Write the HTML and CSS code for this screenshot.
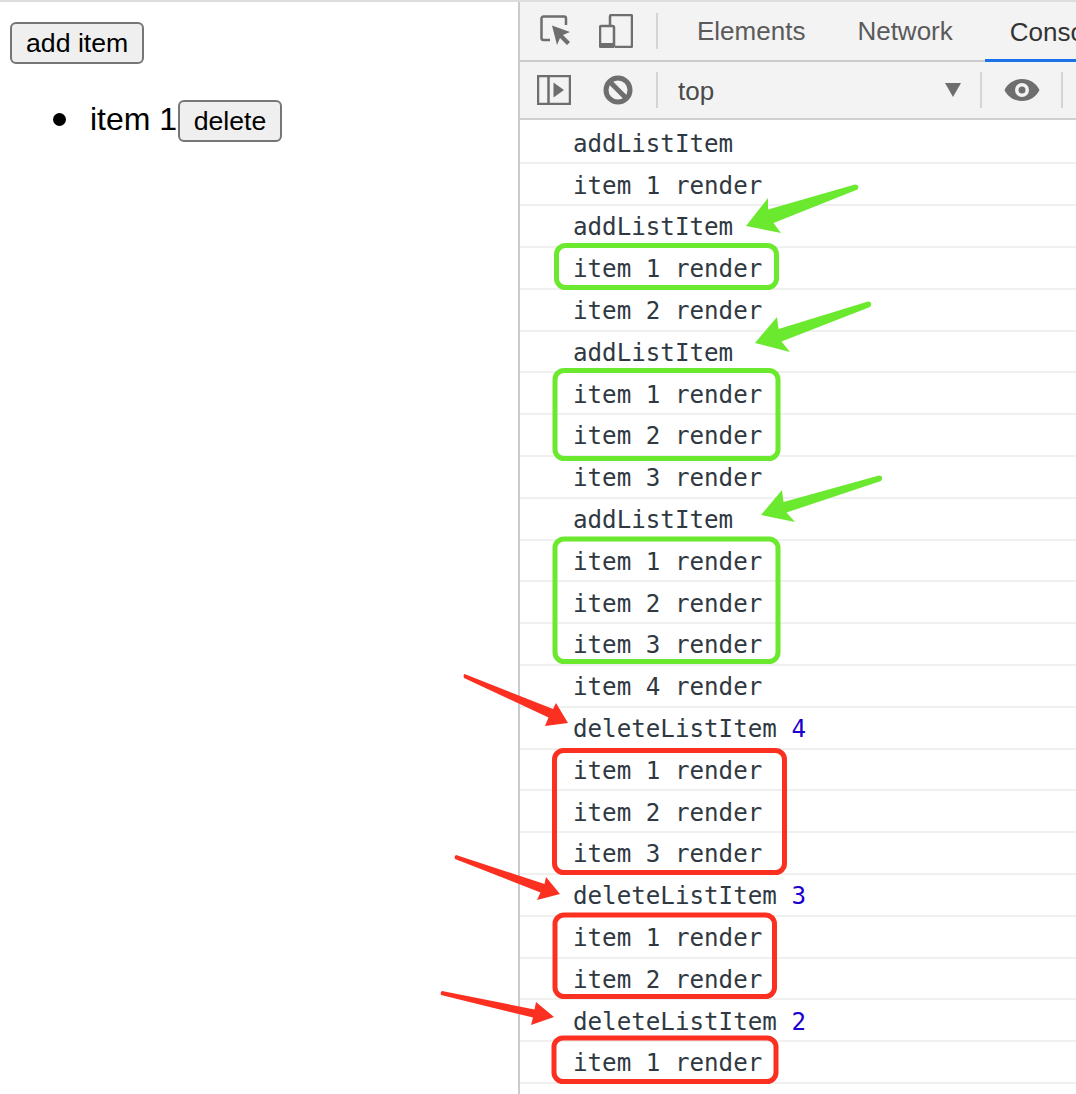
FILE: index.html
```html
<!DOCTYPE html>
<html lang="en">
<head>
<meta charset="utf-8">
<title>React list render demo</title>
<link rel="stylesheet" href="styles.css">
</head>
<body>
<div class="page">
  <main class="app">
    <button class="btn">add item</button>
    <ul class="list"><li class="list-item">item 1<button class="btn btn-delete">delete</button></li></ul>
  </main>
  <section class="devtools">
    <div class="tabs">
      <svg class="icon-select" viewBox="0 0 32 32" width="32" height="32"><path class="line" d="M10 25H3.500a2 2 0 0 1-2-2V3.500a2 2 0 0 1 2-2H24a2 2 0 0 1 2 2V10"/><path class="fill" d="M12 10.500 30 17l-7 3 7 7-3 3-7-7-3 7z"/></svg>
      <svg class="icon-device" viewBox="0 0 34 34" width="34" height="34"><path class="line" d="M11 11V2.500a1.500 1.500 0 0 1 1.500-1.500h19a1.500 1.500 0 0 1 1.500 1.500v29a1.500 1.500 0 0 1-1.500 1.500H16"/><rect class="line" x="1" y="12" width="14" height="21" rx="1.500"/><path class="fill" d="M1 29h14v4H1z"/></svg>
      <span class="sep sep-tabs"></span>
      <span class="tab">Elements</span>
      <span class="tab">Network</span>
      <span class="tab tab-active">Console</span>
    </div>
    <div class="filters">
      <svg class="icon-side" viewBox="0 0 34 30" width="34" height="30"><rect class="line" x="1" y="1" width="32" height="28"/><path class="line" d="M11.500 1v28"/><path class="fill" d="M16.500 7.500 27 15l-10.500 7.500z"/></svg>
      <svg class="icon-block" viewBox="0 0 30 30" width="30" height="30"><circle class="thick" cx="15" cy="15" r="12"/><path class="thick" d="M7 7l16 16"/></svg>
      <span class="sep sep-top"></span>
      <span class="context">top</span>
      <svg class="icon-caret" viewBox="0 0 16 14" width="16" height="14"><path class="fill" d="M0 0h16l-8 14z"/></svg>
      <span class="sep sep-caret"></span>
      <svg class="icon-eye" viewBox="0 0 36 24" width="36" height="24"><path class="fill" d="M18 1C10 1 3.500 5.500 0.500 12 3.500 18.500 10 23 18 23s14.500-4.500 17.500-11C32.500 5.500 26 1 18 1zm0 18a7 7 0 1 1 0-14 7 7 0 0 1 0 14zm0-3.500a3.500 3.500 0 1 0 0-7 3.500 3.500 0 0 0 0 7z"/></svg>
      <span class="sep sep-eye"></span>
    </div>
    <div class="log">
      <div class="row">addListItem</div>
      <div class="row">item 1 render</div>
      <div class="row">addListItem</div>
      <div class="row">item 1 render</div>
      <div class="row">item 2 render</div>
      <div class="row">addListItem</div>
      <div class="row">item 1 render</div>
      <div class="row">item 2 render</div>
      <div class="row">item 3 render</div>
      <div class="row">addListItem</div>
      <div class="row">item 1 render</div>
      <div class="row">item 2 render</div>
      <div class="row">item 3 render</div>
      <div class="row">item 4 render</div>
      <div class="row">deleteListItem <span class="num">4</span></div>
      <div class="row">item 1 render</div>
      <div class="row">item 2 render</div>
      <div class="row">item 3 render</div>
      <div class="row">deleteListItem <span class="num">3</span></div>
      <div class="row">item 1 render</div>
      <div class="row">item 2 render</div>
      <div class="row">deleteListItem <span class="num">2</span></div>
      <div class="row">item 1 render</div>
      <div class="row">deleteListItem <span class="num">1</span></div>
    </div>
  </section>
  <svg class="marks" viewBox="0 0 1076 1094" width="1076" height="1094">
    <g class="green">
      <rect x="556.500" y="245.500" width="220" height="42" rx="9"/>
      <rect x="555" y="370.500" width="223" height="88" rx="9"/>
      <rect x="555" y="539" width="223" height="122.500" rx="9"/>
      <path d="M855 184.500 768 209.500 768 198 746 226 781 233 773.500 223 857.500 189.500Q860 185 855 184.500Z"/>
      <path d="M868 301.500 778.500 329 777 317 755 343 790 352 781.500 341.500 870 307Q873 302 868 301.500Z"/>
      <path d="M879 475.500 783.500 502 782 490 761 515 795 522 786.500 512.500 881 481Q884 476 879 475.500Z"/>
    </g>
    <g class="red">
      <rect x="554.500" y="750.500" width="230" height="122" rx="9"/>
      <rect x="555" y="915" width="219.500" height="81.500" rx="9"/>
      <rect x="554" y="1038" width="222" height="43.500" rx="9"/>
      <path d="M464.500 674 553 709 556 703 568 723 545 726 548.500 717.500 464 678Q463 675 464.500 674Z"/>
      <path d="M456 855 544.500 884 546 877 560 894 537 900 540.500 892.500 455 859Q454 856 456 855Z"/>
      <path d="M442 991 534.500 1009.500 536 1002 554 1017 531 1025 533 1017.500 441 995Q440 992 442 991Z"/>
    </g>
  </svg>
</div>
</body>
</html>
```

FILE: styles.css
```css
* { box-sizing: border-box; }

html, body {
  margin: 0;
  height: 100%;
  overflow: hidden;
  background: #fff;
}

.page {
  position: relative;
  display: flex;
  width: 1076px;
  height: 1094px;
  overflow: hidden;
  border-top: 2px solid #dddddd;
  font-family: "Liberation Sans", Arial, sans-serif;
}

.app {
  flex: 0 0 518px;
  padding: 20px 10px 0;
}

.btn {
  height: 42px;
  padding: 0 14px;
  border: 2px solid #767676;
  border-radius: 6px;
  background: #efefef;
  color: #000;
  font: 26.67px "Liberation Sans", Arial, sans-serif;
}

.btn-delete {
  margin-left: 1px;
  padding: 0 13.500px;
}

.list {
  margin: 36px 0 0;
  padding: 0 0 0 80px;
  list-style: none;
  font-size: 32px;
  line-height: 36px;
}

.list-item { position: relative; }

.list-item::before {
  content: "";
  position: absolute;
  left: -37px;
  top: 13px;
  width: 13px;
  height: 13px;
  border-radius: 50%;
  background: #000;
}

.devtools {
  flex: 1 1 auto;
  display: flex;
  flex-direction: column;
  min-width: 0;
  overflow: hidden;
  border-left: 2px solid #cbcbcb;
}

.tabs, .filters {
  display: flex;
  align-items: center;
  flex: none;
  background: #f3f3f3;
  white-space: nowrap;
}

.tabs svg, .filters svg { flex: none; }

.tabs {
  height: 60px;
  padding-left: 20px;
  border-bottom: 2px solid #cbcbcb;
}

.filters {
  height: 58px;
  padding-left: 17px;
  border-bottom: 2px solid #d0d0d0;
}

.line { fill: none; stroke: #6e6e6e; stroke-width: 2.500; }
.thick { fill: none; stroke: #6e6e6e; stroke-width: 5; }
.fill { fill: #6e6e6e; }

.icon-device { margin-left: 27px; }
.icon-block { margin-left: 32px; }
.icon-caret { margin-left: 231px; }
.icon-eye { margin-left: 22px; }

.sep {
  flex: none;
  width: 2px;
  height: 36px;
  background: #d4d4d4;
}

.sep-tabs { margin-left: 23px; }
.sep-top { margin-left: 23px; }
.sep-caret { margin-left: 19px; }
.sep-eye { margin-left: 21px; }

.tab {
  position: relative;
  flex: none;
  font-size: 26px;
  color: #5a5a5a;
}

.sep-tabs + .tab { margin-left: 39px; }
.tab + .tab { margin-left: 52px; }
.tab + .tab-active { margin-left: 57px; }

.tab-active {
  height: 100%;
  line-height: 60px;
  color: #333;
}

.tab-active::after {
  content: "";
  position: absolute;
  left: -25px;
  right: -60px;
  bottom: -2px;
  height: 3px;
  background: #1a73e8;
}

.context {
  margin: 2px 0 0 20px;
  font-size: 26px;
  color: #4a4a4a;
}

.log {
  flex: 1 1 auto;
  overflow: hidden;
  padding-top: 2.600px;
}

.row {
  display: flex;
  align-items: center;
  height: 41.800px;
  padding: 3px 0 0 53px;
  border-bottom: 2px solid #f0f0f0;
  color: #303942;
  font: 24.200px/1 "DejaVu Sans Mono", "Liberation Mono", monospace;
  white-space: pre;
}

.num { color: #1c00cf; }

.marks {
  position: absolute;
  left: 0;
  top: -2px;
  pointer-events: none;
}

.green rect { fill: none; stroke: #6be92f; stroke-width: 5; }
.green path { fill: #6be92f; }
.red rect { fill: none; stroke: #fb3021; stroke-width: 5; }
.red path { fill: #fb3021; }
```
